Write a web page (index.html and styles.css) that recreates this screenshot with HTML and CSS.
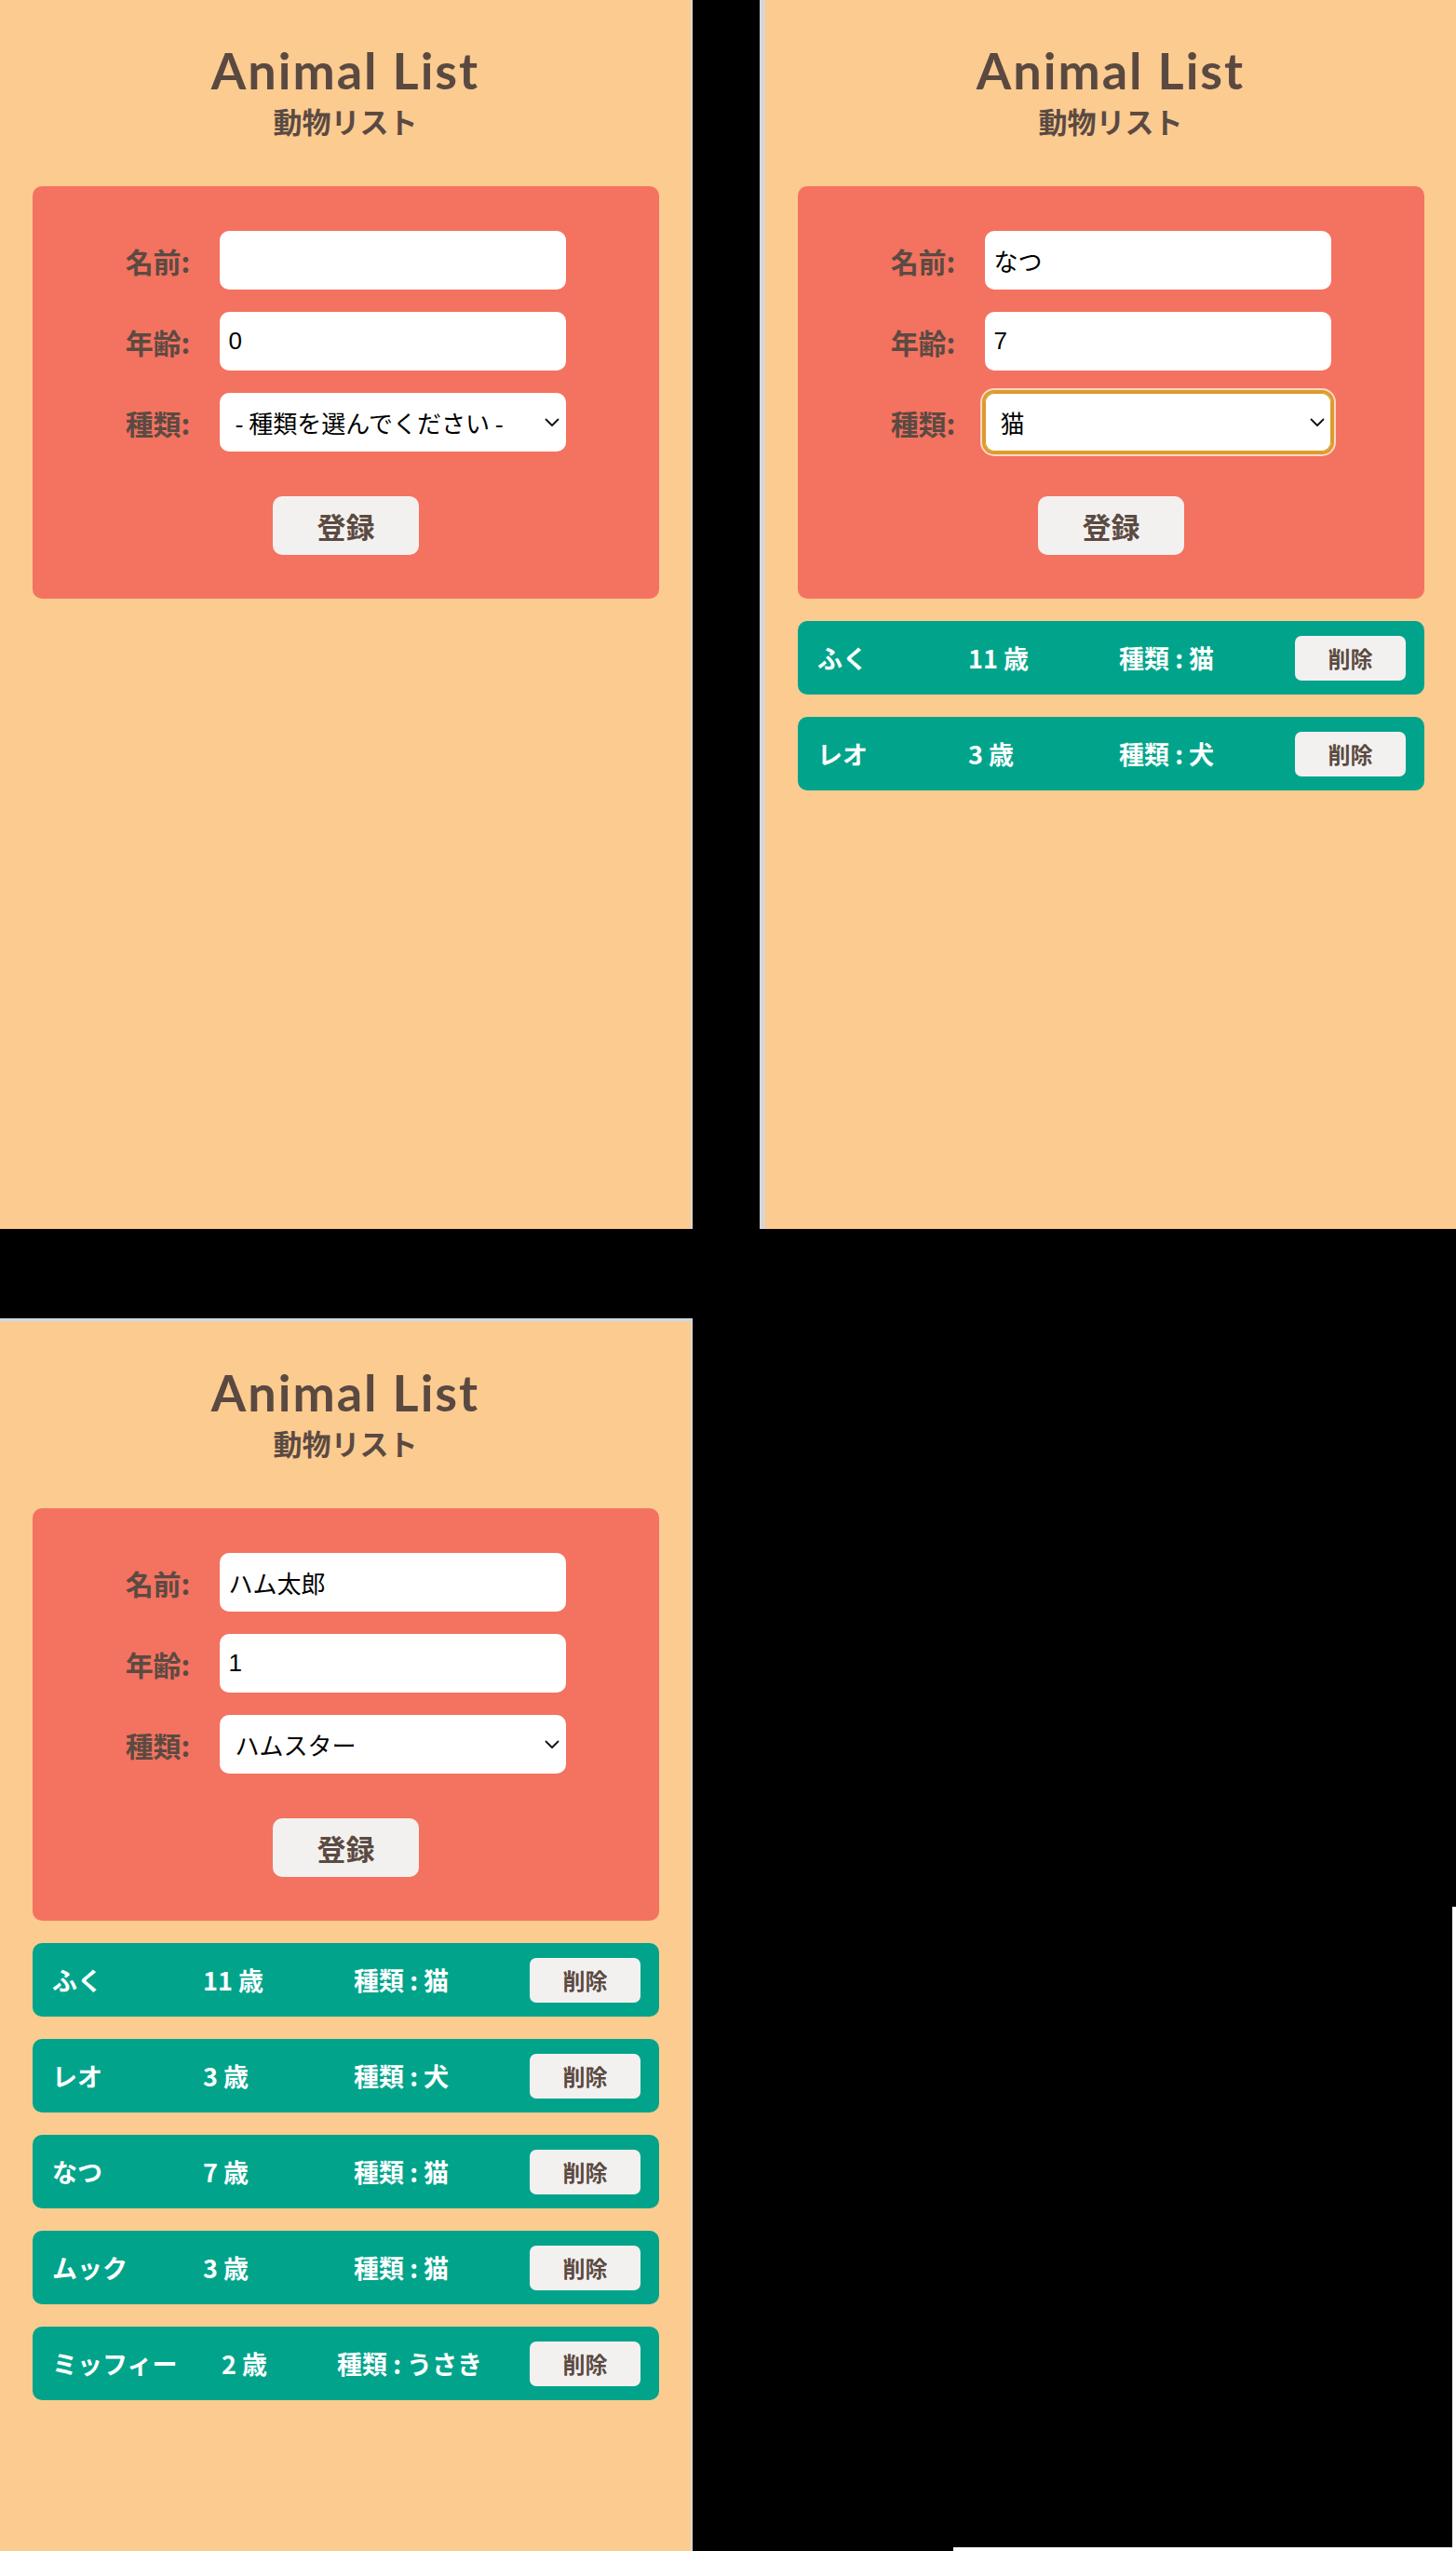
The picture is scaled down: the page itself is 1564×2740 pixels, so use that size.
FILE: index.html
```html
<!DOCTYPE html>
<html lang="ja">
<head>
<meta charset="utf-8">
<title>Animal List</title>
<link rel="stylesheet" href="styles.css">
</head>
<body>
<div class="board">

  <section class="screen screen--first">
    <header class="head">
      <h1 class="title">Animal List</h1>
      <p class="subtitle">動物リスト</p>
    </header>
    <form class="card">
      <div class="field"><label class="label">名前:</label><input class="control" type="text" value=""></div>
      <div class="field"><label class="label">年齢:</label><input class="control" type="text" value="0"></div>
      <div class="field"><label class="label">種類:</label>
        <span class="select-wrap">
          <select class="control control--select"><option>- 種類を選んでください -</option></select>
          <svg class="chev" viewBox="0 0 16 10" width="16" height="10"><path d="M1.5 1.5 L8 8 L14.5 1.5" fill="none" stroke="#111" stroke-width="1.8" stroke-linecap="round" stroke-linejoin="round"/></svg>
        </span>
      </div>
      <div class="actions"><button type="button" class="submit">登録</button></div>
    </form>
  </section>

  <section class="screen screen--second">
    <header class="head">
      <h1 class="title">Animal List</h1>
      <p class="subtitle">動物リスト</p>
    </header>
    <form class="card">
      <div class="field"><label class="label">名前:</label><input class="control" type="text" value="なつ"></div>
      <div class="field"><label class="label">年齢:</label><input class="control" type="text" value="7"></div>
      <div class="field"><label class="label">種類:</label>
        <span class="select-wrap">
          <select class="control control--select is-focused"><option>猫</option></select>
          <svg class="chev" viewBox="0 0 16 10" width="16" height="10"><path d="M1.5 1.5 L8 8 L14.5 1.5" fill="none" stroke="#111" stroke-width="1.8" stroke-linecap="round" stroke-linejoin="round"/></svg>
        </span>
      </div>
      <div class="actions"><button type="button" class="submit">登録</button></div>
    </form>
    <ul class="list">
      <li class="item"><span class="cell">ふく</span><span class="cell">11 歳</span><span class="cell">種類 : 猫</span><button type="button" class="del">削除</button></li>
      <li class="item"><span class="cell">レオ</span><span class="cell">3 歳</span><span class="cell">種類 : 犬</span><button type="button" class="del">削除</button></li>
    </ul>
  </section>

  <section class="screen screen--third">
    <header class="head">
      <h1 class="title">Animal List</h1>
      <p class="subtitle">動物リスト</p>
    </header>
    <form class="card">
      <div class="field"><label class="label">名前:</label><input class="control" type="text" value="ハム太郎"></div>
      <div class="field"><label class="label">年齢:</label><input class="control" type="text" value="1"></div>
      <div class="field"><label class="label">種類:</label>
        <span class="select-wrap">
          <select class="control control--select"><option>ハムスター</option></select>
          <svg class="chev" viewBox="0 0 16 10" width="16" height="10"><path d="M1.5 1.5 L8 8 L14.5 1.5" fill="none" stroke="#111" stroke-width="1.8" stroke-linecap="round" stroke-linejoin="round"/></svg>
        </span>
      </div>
      <div class="actions"><button type="button" class="submit">登録</button></div>
    </form>
    <ul class="list">
      <li class="item"><span class="cell">ふく</span><span class="cell">11 歳</span><span class="cell">種類 : 猫</span><button type="button" class="del">削除</button></li>
      <li class="item"><span class="cell">レオ</span><span class="cell">3 歳</span><span class="cell">種類 : 犬</span><button type="button" class="del">削除</button></li>
      <li class="item"><span class="cell">なつ</span><span class="cell">7 歳</span><span class="cell">種類 : 猫</span><button type="button" class="del">削除</button></li>
      <li class="item"><span class="cell">ムック</span><span class="cell">3 歳</span><span class="cell">種類 : 猫</span><button type="button" class="del">削除</button></li>
      <li class="item item--wide"><span class="cell">ミッフィー</span><span class="cell">2 歳</span><span class="cell">種類 : うさき</span><button type="button" class="del">削除</button></li>
    </ul>
  </section>

  <div class="edge-cell"><div class="edge"></div></div>

</div>
</body>
</html>
```

FILE: styles.css
```css
* { box-sizing: border-box; }

html, body {
  margin: 0;
  padding: 0;
  background: #000;
}

body {
  width: 1564px;
  height: 2740px;
  overflow: hidden;
  font-family: "Noto Sans CJK JP", "Noto Sans", sans-serif;
  color: #5b4a42;
}

.board {
  display: grid;
  grid-template-columns: 744px 748px;
  grid-template-rows: 1320px 1324px;
  column-gap: 72px;
  row-gap: 96px;
}

.screen {
  background: #fbcb90;
  padding-top: 49px;
  overflow: hidden;
}

.screen--first { border-right: 2px solid #d8d6d4; }
.screen--second { border-left: 6px solid #d8d6d4; }
.screen--third { border-top: 4px solid #d8d6d4; border-right: 2px solid #d8d6d4; }

.head {
  text-align: center;
  margin: 0;
}

.title {
  margin: 0;
  font-family: "Lato", "Open Sans", sans-serif;
  font-weight: 700;
  font-size: 54px;
  line-height: 54px;
  letter-spacing: 2px;
  color: #5a4941;
}

.subtitle {
  margin: 12px 0 0;
  font-family: "Noto Sans CJK JP", sans-serif;
  font-weight: 700;
  font-size: 31px;
  line-height: 30px;
  color: #5b4a42;
}

.card {
  margin: 55px 34px 0 35px;
  padding: 48px 0 47px;
  background: #f47260;
  border-radius: 10px;
  display: flex;
  flex-direction: column;
  gap: 24px;
}

.field {
  display: flex;
  justify-content: center;
  align-items: center;
  gap: 32px;
  height: 63px;
}

.label {
  font-family: "Noto Sans CJK JP", sans-serif;
  font-weight: 700;
  font-size: 30px;
  line-height: 1;
  color: #5b4a42;
}

.control {
  width: 372px;
  height: 63px;
  border: none;
  border-radius: 10px;
  background: #fff;
  padding: 0 9px;
  font-family: "Liberation Sans", "Noto Sans CJK JP", sans-serif;
  font-size: 26px;
  color: #000;
  outline: none;
}

.select-wrap {
  position: relative;
  display: block;
  width: 372px;
  height: 63px;
}

.control--select {
  appearance: none;
  -webkit-appearance: none;
  padding: 0 40px 0 16px;
  font-family: "Noto Sans CJK JP", sans-serif;
}

.control--select.is-focused {
  box-shadow: 0 0 0 1px #dd9b2b inset, 0 0 0 3px #dd9b2b, 0 0 0 5px rgba(255, 240, 225, 0.8);
}

.chev {
  position: absolute;
  right: 7px;
  top: 27px;
  width: 16px;
  height: 10px;
  pointer-events: none;
}

.actions {
  display: flex;
  justify-content: center;
  margin-top: 24px;
}

.submit {
  width: 157px;
  height: 63px;
  border: none;
  border-radius: 10px;
  background: #f3f1ef;
  font-family: "Noto Sans CJK JP", sans-serif;
  font-weight: 700;
  font-size: 31px;
  color: #5b4a42;
  padding: 0;
}

.list {
  list-style: none;
  margin: 24px 34px 0 35px;
  padding: 0;
  display: flex;
  flex-direction: column;
  gap: 24px;
}

.item {
  height: 79px;
  background: #01a48b;
  border-radius: 10px;
  display: flex;
  align-items: center;
  padding: 0 20px 0 21px;
  color: #fff;
  font-family: "Noto Sans CJK JP", sans-serif;
  font-weight: 700;
  font-size: 27px;
}

.cell {
  flex: 1 1 0;
  white-space: nowrap;
}

.item--wide .cell:nth-child(1) { flex: 0 0 182px; }
.item--wide .cell:nth-child(2) { flex: 0 0 124px; }

.del {
  margin-left: 27px;
  width: 119px;
  height: 48px;
  border: none;
  border-radius: 7px;
  background: #f3f1ef;
  font-family: "Noto Sans CJK JP", sans-serif;
  font-weight: 700;
  font-size: 24px;
  color: #5b4a42;
  padding: 0;
  flex: none;
}

.edge-cell {
  display: flex;
  justify-content: flex-end;
  align-items: flex-end;
}

.edge {
  width: 540px;
  height: 692px;
  border-right: 4px solid #fff;
  border-bottom: 4px solid #fff;
}
```
